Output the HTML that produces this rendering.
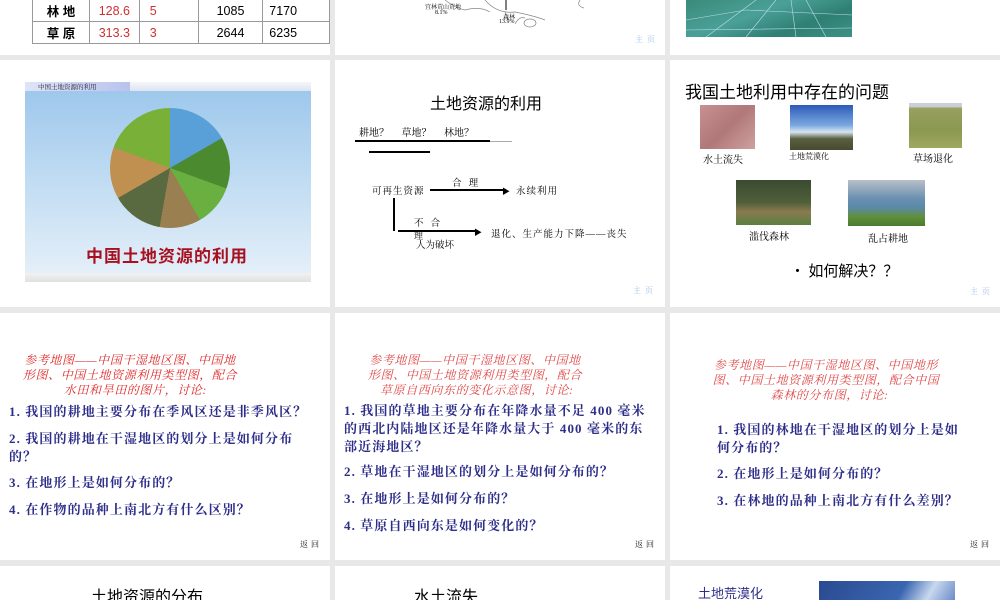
<!DOCTYPE html>
<html><head><meta charset="utf-8"><style>
body{margin:0;width:1000px;height:600px;background:#e8e8e8;position:relative;overflow:hidden;font-family:"Liberation Serif","Noto Serif CJK SC","Noto Sans CJK SC",serif}
.s{position:absolute;background:#fff;overflow:hidden}
.a{position:absolute;white-space:nowrap}
.q{color:#2e2e8a;font-size:13px;line-height:18px;letter-spacing:1.1px;font-weight:bold}
.r{color:#e02828;font-style:italic;font-size:12px;line-height:15px;text-align:center;letter-spacing:.6px}
.sm{font-size:8px;color:#222;letter-spacing:3px}
.zy{font-size:8px;color:#9cc0e8;letter-spacing:4px}
</style></head><body>

<!-- row1 -->
<div class="s" style="left:0;top:0;width:330px;height:55px">
 <table style="position:absolute;left:32px;top:-6px;border-collapse:collapse;font-family:'Liberation Sans','Noto Sans CJK SC',sans-serif;font-size:12.5px" >
 <tr style="height:23px"><td style="width:57px;border:1px solid #999;text-align:center;font-weight:bold;padding-top:6px">林 地</td><td style="width:48px;border:1px solid #999;color:#d03030;text-align:center;padding-top:6px">128.6</td><td style="width:51px;border:1px solid #999;color:#d03030;padding:6px 0 0 10px">5</td><td style="width:64px;border:1px solid #999;text-align:center;padding-top:6px">1085</td><td style="width:62px;border:1px solid #999;padding:6px 0 0 6px">7170</td></tr>
 <tr style="height:21px"><td style="border:1px solid #999;text-align:center;font-weight:bold">草 原</td><td style="border:1px solid #999;color:#d03030;text-align:center">313.3</td><td style="border:1px solid #999;color:#d03030;padding-left:10px">3</td><td style="border:1px solid #999;text-align:center">2644</td><td style="border:1px solid #999;padding-left:6px">6235</td></tr>
 </table>
</div>
<div class="s" style="left:335px;top:0;width:330px;height:55px">
 <svg width="330" height="55" style="position:absolute;left:0;top:0"><path d="M110 0 q10 8 20 10 q15 -4 25 2 M150 0 q12 14 30 12 q20 4 30 8 M170 12 l3 8 M190 18 q-6 -2 -10 6 M245 0 q-4 6 4 8" stroke="#888" fill="none" stroke-width=".7"/><path d="M171 0v10" stroke="#000" stroke-width="1"/><ellipse cx="195" cy="23" rx="6" ry="4" fill="none" stroke="#888" stroke-width=".7"/></svg>
 <div class="a" style="left:90px;top:2px;font-size:6px">宜林荒山荒地</div>
 <div class="a" style="left:100px;top:10px;font-size:6px">8.1%</div>
 <div class="a" style="left:168px;top:12px;font-size:6px">森林</div>
 <div class="a" style="left:164px;top:19px;font-size:6px">13.9%</div>
 <div class="a zy" style="left:300px;top:34px">主页</div>
</div>
<div class="s" style="left:670px;top:0;width:330px;height:55px">
 <div style="position:absolute;left:16px;top:0;width:166px;height:37px;background:linear-gradient(160deg,#3a8a7a,#4aa097 40%,#2f7f73 70%,#3c9286)"></div>
 <svg width="166" height="37" style="position:absolute;left:16px;top:0"><path d="M0 20 L60 10 L166 15 M20 37 L70 0 M60 37 L90 0 M110 37 L105 0 M140 37 L120 0 M0 30 L166 28" stroke="#bde" stroke-width=".6" fill="none"/></svg>
</div>

<!-- row2 -->
<div class="s" style="left:0;top:60px;width:330px;height:247px">
 <div style="position:absolute;left:25px;top:22px;width:286px;height:9px;background:linear-gradient(#f4f6fb,#dde3f0)"></div>
 <div style="position:absolute;left:25px;top:22px;width:105px;height:9px;background:linear-gradient(90deg,#dfe4f6,#b9c2ee)"></div>
 <div class="a" style="left:38px;top:22px;font-size:6.5px;color:#223">中国土地资源的利用</div>
 <div style="position:absolute;left:25px;top:31px;width:286px;height:182px;background:linear-gradient(#9ec8ec,#c8e0f4 60%,#e4eff9)"></div>
 <div style="position:absolute;left:25px;top:213px;width:286px;height:9px;background:linear-gradient(#f2f2f2,#e0e0e0)"></div>
 <div style="position:absolute;left:110px;top:48px;width:120px;height:120px;border-radius:50%;background:conic-gradient(#5aa0d8 0 60deg,#4c8a30 60deg 110deg,#6ab040 110deg 150deg,#9a8050 150deg 190deg,#5a6a40 190deg 240deg,#c09050 240deg 290deg,#78b038 290deg 360deg)"></div>
 <div class="a" style="left:86px;top:182px;font-size:17px;color:#a81020;font-weight:bold;letter-spacing:1px;font-family:'Noto Sans CJK SC',sans-serif">中国土地资源的利用</div>
</div>
<div class="s" style="left:335px;top:60px;width:330px;height:247px">
 <div class="a" style="left:95px;top:30px;font-size:16px;font-family:'Noto Sans CJK SC',sans-serif">土地资源的利用</div>
 <div class="a" style="left:24px;top:64px;font-size:10px">耕地？&nbsp;&nbsp;&nbsp;&nbsp;&nbsp;草地？&nbsp;&nbsp;&nbsp;&nbsp;&nbsp;林地？</div>
 <div style="position:absolute;left:20px;top:80px;width:135px;height:2px;background:#000"></div>
 <div style="position:absolute;left:155px;top:81px;width:22px;height:1px;background:#aaa"></div>
 <div style="position:absolute;left:34px;top:91px;width:61px;height:2px;background:#000"></div>
 <div class="a" style="left:37px;top:123px;font-size:9.5px;letter-spacing:1px">可再生资源</div>
 <div style="position:absolute;left:95px;top:129px;width:76px;height:2px;background:#000"></div>
 <div class="a" style="left:167px;top:126px;font-size:8px">▶</div>
 <div class="a" style="left:117px;top:115px;font-size:9.5px">合&nbsp;&nbsp;&nbsp;理</div>
 <div class="a" style="left:181px;top:123px;font-size:9.5px;letter-spacing:1px">永续利用</div>
 <div style="position:absolute;left:58px;top:138px;width:2px;height:33px;background:#000"></div>
 <div style="position:absolute;left:63px;top:170px;width:80px;height:2px;background:#000"></div>
 <div class="a" style="left:139px;top:167px;font-size:8px">▶</div>
 <div class="a" style="left:79px;top:155px;font-size:9.5px">不&nbsp;&nbsp;&nbsp;合</div>
 <div class="a" style="left:79px;top:169px;font-size:9px">理</div>
 <div class="a" style="left:81px;top:177px;font-size:9.5px">人为破坏</div>
 <div class="a" style="left:156px;top:166px;font-size:9.5px;letter-spacing:1px">退化、生产能力下降——丧失</div>
 <div class="a zy" style="left:298px;top:225px">主页</div>
</div>
<div class="s" style="left:670px;top:60px;width:330px;height:247px">
 <div class="a" style="left:15px;top:18px;font-size:17px;font-family:'Noto Sans CJK SC',sans-serif">我国土地利用中存在的问题</div>
 <div style="position:absolute;left:30px;top:45px;width:55px;height:44px;background:linear-gradient(135deg,#c89090,#b07878 50%,#d0a0a0)"></div>
 <div style="position:absolute;left:120px;top:45px;width:63px;height:45px;background:linear-gradient(#2c5ab8,#7aa8e0 45%,#d8e4f0 60%,#586040 75%,#4a4a30)"></div>
 <div style="position:absolute;left:239px;top:43px;width:53px;height:45px;background:linear-gradient(#c8d0d8 0,#c8d0d8 8%,#98a060 12%,#8a9850 60%,#a0a860)"></div>
 <div class="a" style="left:33px;top:91px;font-size:10px">水土流失</div>
 <div class="a" style="left:119px;top:91px;font-size:8px">土地荒漠化</div>
 <div class="a" style="left:243px;top:90px;font-size:10px">草场退化</div>
 <div style="position:absolute;left:66px;top:120px;width:75px;height:45px;background:linear-gradient(#3a4a30,#50603a 50%,#8a7a50 70%,#5a8040)"></div>
 <div style="position:absolute;left:178px;top:120px;width:77px;height:46px;background:linear-gradient(#b8c0c8,#6a90b0 40%,#5a8aa8 60%,#60903a 80%,#4a7a30)"></div>
 <div class="a" style="left:79px;top:168px;font-size:10px">滥伐森林</div>
 <div class="a" style="left:198px;top:170px;font-size:10px">乱占耕地</div>
 <div class="a" style="left:120px;top:200px;font-size:15px;font-family:'Noto Sans CJK SC',sans-serif">• 如何解决？？</div>
 <div class="a zy" style="left:300px;top:226px">主页</div>
</div>

<!-- row3 -->
<div class="s" style="left:0;top:313px;width:330px;height:247px">
 <div class="a r" style="left:10px;top:40px;width:240px;">参考地图——中国干湿地区图、中国地<br>形图、中国土地资源利用类型图，配合<br>&nbsp;&nbsp;&nbsp;水田和旱田的图片，讨论:</div>
 <div class="a q" style="left:9px;top:90px">1. 我国的耕地主要分布在季风区还是非季风区？</div>
 <div class="a q" style="left:9px;top:117px">2. 我国的耕地在干湿地区的划分上是如何分布<br>的？</div>
 <div class="a q" style="left:9px;top:161px">3. 在地形上是如何分布的？</div>
 <div class="a q" style="left:9px;top:188px">4. 在作物的品种上南北方有什么区别？</div>
 <div class="a sm" style="left:300px;top:226px">返回</div>
</div>
<div class="s" style="left:335px;top:313px;width:330px;height:247px">
 <div class="a r" style="left:20px;top:40px;width:240px;color:#e04848">参考地图——中国干湿地区图、中国地<br>形图、中国土地资源利用类型图，配合<br>&nbsp;草原自西向东的变化示意图，讨论:</div>
 <div class="a q" style="left:9px;top:89px">1. 我国的草地主要分布在年降水量不足 400 毫米<br>的西北内陆地区还是年降水量大于 400 毫米的东<br>部近海地区？</div>
 <div class="a q" style="left:9px;top:150px">2. 草地在干湿地区的划分上是如何分布的？</div>
 <div class="a q" style="left:9px;top:177px">3. 在地形上是如何分布的？</div>
 <div class="a q" style="left:9px;top:204px">4. 草原自西向东是如何变化的？</div>
 <div class="a sm" style="left:300px;top:226px">返回</div>
</div>
<div class="s" style="left:670px;top:313px;width:330px;height:247px">
 <div class="a r" style="left:36px;top:45px;width:240px;color:#e04848">参考地图——中国干湿地区图、中国地形<br>图、中国土地资源利用类型图，配合中国<br>&nbsp;&nbsp;森林的分布图，讨论:</div>
 <div class="a q" style="left:47px;top:108px">1. 我国的林地在干湿地区的划分上是如<br>何分布的？</div>
 <div class="a q" style="left:47px;top:152px">2. 在地形上是如何分布的？</div>
 <div class="a q" style="left:47px;top:179px">3. 在林地的品种上南北方有什么差别？</div>
 <div class="a sm" style="left:300px;top:226px">返回</div>
</div>

<!-- row4 -->
<div class="s" style="left:0;top:566px;width:330px;height:34px">
 <div class="a" style="left:91px;top:17px;font-size:16px;font-family:'Noto Sans CJK SC',sans-serif">土地资源的分布</div>
</div>
<div class="s" style="left:335px;top:566px;width:330px;height:34px">
 <div class="a" style="left:79px;top:17px;font-size:16px;font-family:'Noto Sans CJK SC',sans-serif">水土流失</div>
</div>
<div class="s" style="left:670px;top:566px;width:330px;height:34px">
 <div class="a" style="left:28px;top:17px;font-size:13px;color:#2e2e8a;font-family:'Noto Sans CJK SC',sans-serif">土地荒漠化</div>
 <div style="position:absolute;left:149px;top:15px;width:136px;height:20px;background:linear-gradient(120deg,#2a4a90,#3a66b0 60%,#c8d8ee 80%,#6a8ac8)"></div>
</div>
</body></html>
